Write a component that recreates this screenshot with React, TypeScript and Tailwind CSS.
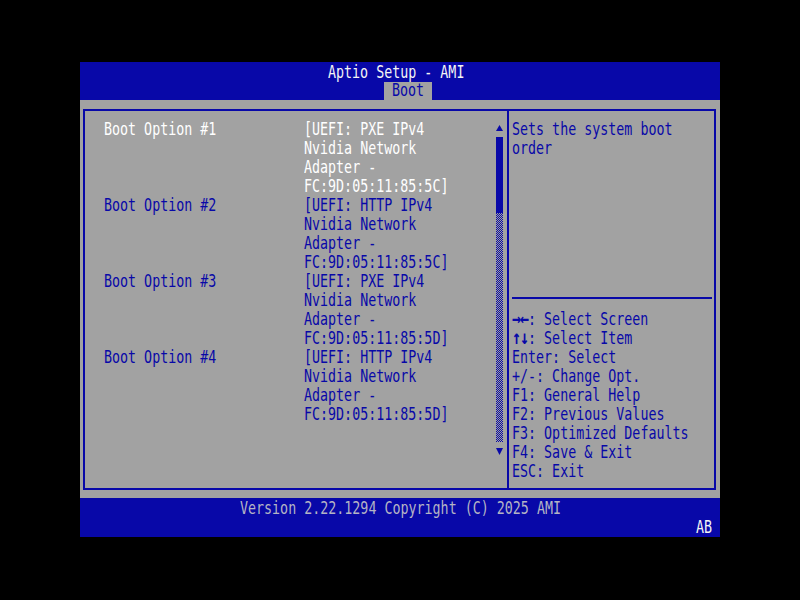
import React from "react";

function L({ children, className = "" }: { children?: React.ReactNode; className?: string }) {
  return (
    <div className={`h-[19px] leading-[19px] whitespace-pre ${className}`}>
      <span className="inline-block origin-center scale-y-[1.3]">{children ?? " "}</span>
    </div>
  );
}

const options = [
  { label: "Boot Option #1", lines: ["[UEFI: PXE IPv4", "Nvidia Network", "Adapter -", "FC:9D:05:11:85:5C]"], sel: true },
  { label: "Boot Option #2", lines: ["[UEFI: HTTP IPv4", "Nvidia Network", "Adapter -", "FC:9D:05:11:85:5C]"], sel: false },
  { label: "Boot Option #3", lines: ["[UEFI: PXE IPv4", "Nvidia Network", "Adapter -", "FC:9D:05:11:85:5D]"], sel: false },
  { label: "Boot Option #4", lines: ["[UEFI: HTTP IPv4", "Nvidia Network", "Adapter -", "FC:9D:05:11:85:5D]"], sel: false },
];

const keys: [string, string][] = [
  ["→←", ": Select Screen"],
  ["↑↓", ": Select Item"],
  ["", "Enter: Select"],
  ["", "+/-: Change Opt."],
  ["", "F1: General Help"],
  ["", "F2: Previous Values"],
  ["", "F3: Optimized Defaults"],
  ["", "F4: Save & Exit"],
  ["", "ESC: Exit"],
];

function ScrollBar() {
  return (
    <div className="w-[7px] flex flex-col pt-[8px]">
      <div className="h-[18px] pt-[6px]">
        <svg width="7" height="6" viewBox="0 0 7 6" className="block">
          <polygon points="3.5,0 7,6 0,6" fill="#0808a8" />
        </svg>
      </div>
      <div className="h-[76px] bg-[#0808a8]" />
      <svg width="7" height="229" className="block">
        <defs>
          <pattern id="chk" width="2" height="2" patternUnits="userSpaceOnUse">
            <rect x="0" y="0" width="2" height="2" fill="#a2a2a2" />
            <rect x="0" y="0" width="1" height="1" fill="#0808a8" />
            <rect x="1" y="1" width="1" height="1" fill="#0808a8" />
          </pattern>
        </defs>
        <rect x="0" y="0" width="7" height="229" fill="url(#chk)" />
      </svg>
      <div className="h-[19px] pt-[6px]">
        <svg width="7" height="7" viewBox="0 0 7 7" className="block">
          <polygon points="0,0 7,0 3.5,7" fill="#0808a8" />
        </svg>
      </div>
    </div>
  );
}

export default function App() {
  return (
    <div className="w-[800px] h-[600px] bg-black pt-[62px] pl-[80px] font-['DejaVu_Sans_Mono',monospace] text-[13.33px]">
      <div className="w-[640px] flex flex-col">
        <header className="bg-[#0808a8] h-[38px] pt-[1px]">
          <L className="pl-[248px] text-[#f4f4f4]">Aptio Setup - AMI</L>
          <div className="pl-[304px] h-[18px] flex">
            <div className="bg-[#a2a2a2] px-[8px] h-[18px] leading-[18px] text-[#0808a8]">
              <span className="inline-block origin-center scale-y-[1.3]">Boot</span>
            </div>
          </div>
        </header>

        <main className="bg-[#a2a2a2] h-[398px] pt-[9px] pl-[3px] pr-[4px]">
          <div className="border-2 border-[#0808a8] h-[381px] flex">
            <div className="w-[422px] flex">
              <div className="w-[411px] pl-[19px] pt-[9px]">
                {options.map((o) => (
                  <div key={o.label} className="flex">
                    <div className={`w-[200px] ${o.sel ? "text-white" : "text-[#0808a8]"}`}>
                      <L>{o.label}</L>
                    </div>
                    <div className={o.sel ? "text-white" : "text-[#0808a8]"}>
                      {o.lines.map((l, i) => (
                        <L key={i}>{l}</L>
                      ))}
                    </div>
                  </div>
                ))}
              </div>
              <ScrollBar />
            </div>
            <div className="w-[2px] bg-[#0808a8]" />
            <div className="flex-1 pt-[9px] pl-[3px] pr-[2px] text-[#0808a8]">
              <L>Sets the system boot</L>
              <L>order</L>
              <div className="h-[133px]" />
              <div className="h-[19px] pt-[6px]">
                <div className="h-[2px] w-[200px] bg-[#0808a8]" />
              </div>
              {keys.map(([a, b]) => (
                <L key={b}>
                  {a && <span className="font-bold text-[15px] tracking-[-1.03px] leading-none">{a}</span>}
                  {b}
                </L>
              ))}
            </div>
          </div>
        </main>

        <footer className="bg-[#0808a8] h-[39px] pt-[1px]">
          <L className="pl-[160px] text-[#b4b4c4]">Version 2.22.1294 Copyright (C) 2025 AMI</L>
          <L className="text-right pr-[8px] text-[#f4f4f4]">AB</L>
        </footer>
      </div>
    </div>
  );
}
